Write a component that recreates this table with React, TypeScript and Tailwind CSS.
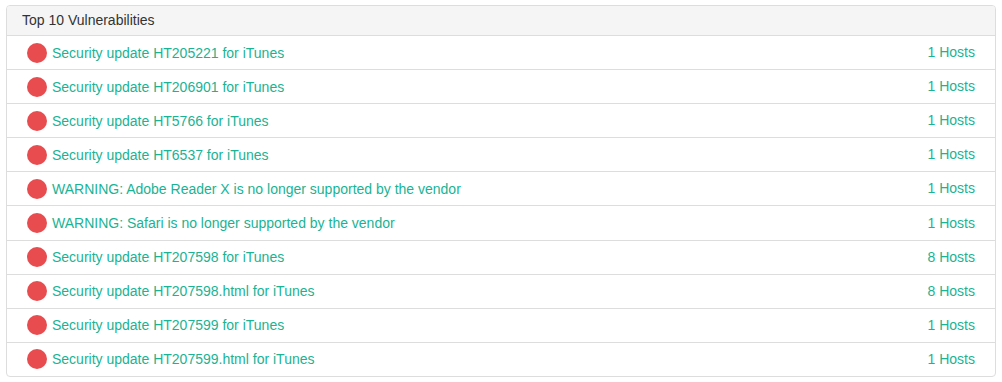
import React from "react";

const items = [
    {name: "Security update HT205221 for iTunes", hosts: 1},
    {name: "Security update HT206901 for iTunes", hosts: 1},
    {name: "Security update HT5766 for iTunes", hosts: 1},
    {name: "Security update HT6537 for iTunes", hosts: 1},
    {name: "WARNING: Adobe Reader X is no longer supported by the vendor", hosts: 1},
    {name: "WARNING: Safari is no longer supported by the vendor", hosts: 1},
    {name: "Security update HT207598 for iTunes", hosts: 8},
    {name: "Security update HT207598.html for iTunes", hosts: 8},
    {name: "Security update HT207599 for iTunes", hosts: 1},
    {name: "Security update HT207599.html for iTunes", hosts: 1},
];

export default function App() {
    return (
        <div className="bg-white w-[1002px] h-[382px] pt-[5px] pl-[6px] font-['Liberation_Sans',Arial,sans-serif]">
            <div className="w-[990px] border border-[#dddddd] rounded-[4px] overflow-hidden">
                <div className="bg-[#f5f5f5] h-[29px] flex items-center pl-[15px] text-[14px] text-[#333]">
                    Top 10 Vulnerabilities
                </div>
                {items.map((item, i) => (
                    <div key={i}
                         className="flex items-center justify-between h-[34.1px] border-t border-[#dddddd] pl-[20px] pr-[20px] text-[14px] text-[#1ab394]">
                        <div className="flex items-center gap-[5px]">
                            <span className="w-[20px] h-[20px] rounded-full bg-[#e84c4f] inline-block"/>
                            <a href="#" className="leading-none">{item.name}</a>
                        </div>
                        <span>{item.hosts} Hosts</span>
                    </div>
                ))}
            </div>
        </div>
    )
}
